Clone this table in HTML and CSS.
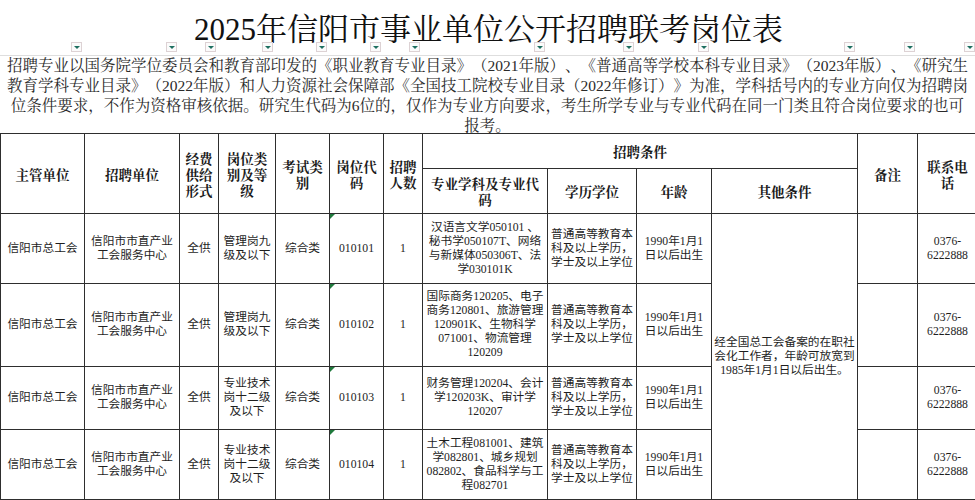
FILE: index.html
```html
<!DOCTYPE html>
<html lang="zh-CN">
<head>
<meta charset="utf-8">
<title>2025年信阳市事业单位公开招聘联考岗位表</title>
<link rel="stylesheet" href="styles.css">
</head>
<body>
<div class="sheet">
  <div class="title-row">
    <h1 class="title">2025年信阳市事业单位公开招聘联考岗位表</h1>
    <div class="filters">
      <span class="fcell"><i class="fbtn"></i></span>
      <span class="fcell"><i class="fbtn"></i></span>
      <span class="fcell"><i class="fbtn"></i></span>
      <span class="fcell"><i class="fbtn"></i></span>
      <span class="fcell"><i class="fbtn"></i></span>
      <span class="fcell"><i class="fbtn"></i></span>
      <span class="fcell"><i class="fbtn"></i></span>
      <span class="fcell"><i class="fbtn"></i></span>
      <span class="fcell"><i class="fbtn"></i></span>
      <span class="fcell"><i class="fbtn"></i></span>
      <span class="fcell"><i class="fbtn"></i></span>
      <span class="fcell"><i class="fbtn"></i></span>
      <span class="fcell"><i class="fbtn"></i></span>
    </div>
  </div>
  <div class="intro">
    <span class="line">招聘专业以国务院学位委员会和教育部印发的《职业教育专业目录》（2021年版）、《普通高等学校本科专业目录》（2023年版）、《研究生</span>
    <span class="line">教育学科专业目录》（2022年版）和人力资源社会保障部《全国技工院校专业目录（2022年修订）》为准，学科括号内的专业方向仅为招聘岗</span>
    <span class="line">位条件要求，不作为资格审核依据。研究生代码为6位的，仅作为专业方向要求，考生所学专业与专业代码在同一门类且符合岗位要求的也可</span>
    <span class="line">报考。</span>
  </div>
  <table class="grid">
    <colgroup>
      <col class="w84"><col class="w95"><col class="w39"><col class="w57"><col class="w54"><col class="w54"><col class="w39">
      <col class="w125"><col class="w89"><col class="w75"><col class="w146"><col class="w60"><col class="w60">
    </colgroup>
    <thead>
      <tr class="h1">
        <th rowspan="2">主管单位</th>
        <th rowspan="2">招聘单位</th>
        <th rowspan="2">经费<br>供给<br>形式</th>
        <th rowspan="2">岗位类<br>别及等<br>级</th>
        <th rowspan="2">考试类<br>别</th>
        <th rowspan="2">岗位代<br>码</th>
        <th rowspan="2">招聘<br>人数</th>
        <th colspan="4">招聘条件</th>
        <th rowspan="2">备注</th>
        <th rowspan="2">联系电<br>话</th>
      </tr>
      <tr class="h2">
        <th>专业学科及专业代<br>码</th>
        <th>学历学位</th>
        <th>年龄</th>
        <th>其他条件</th>
      </tr>
    </thead>
    <tbody>
      <tr class="r1">
        <td class="spaced">信阳市总工会</td>
        <td>信阳市市直产业<br>工会服务中心</td>
        <td>全供</td>
        <td>管理岗九<br>级及以下</td>
        <td>综合类</td>
        <td class="code"><i class="flag"></i>010101</td>
        <td>1</td>
        <td>汉语言文学050101 、<br>秘书学050107T、网络<br>与新媒体050306T、法<br>学030101K</td>
        <td>普通高等教育本<br>科及以上学历，<br>学士及以上学位</td>
        <td>1990年1月1<br>日以后出生</td>
        <td rowspan="4">经全国总工会备案的在职社<br>会化工作者，年龄可放宽到<br>1985年1月1日以后出生。</td>
        <td></td>
        <td>0376-<br>6222888</td>
      </tr>
      <tr class="r2">
        <td class="spaced">信阳市总工会</td>
        <td>信阳市市直产业<br>工会服务中心</td>
        <td>全供</td>
        <td>管理岗九<br>级及以下</td>
        <td>综合类</td>
        <td class="code"><i class="flag"></i>010102</td>
        <td>1</td>
        <td>国际商务120205、电子<br>商务120801、旅游管理<br>120901K、生物科学<br>071001、物流管理<br>120209</td>
        <td>普通高等教育本<br>科及以上学历，<br>学士及以上学位</td>
        <td>1990年1月1<br>日以后出生</td>
        <td></td>
        <td>0376-<br>6222888</td>
      </tr>
      <tr class="r3">
        <td class="spaced">信阳市总工会</td>
        <td>信阳市市直产业<br>工会服务中心</td>
        <td>全供</td>
        <td>专业技术<br>岗十二级<br>及以下</td>
        <td>综合类</td>
        <td class="code"><i class="flag"></i>010103</td>
        <td>1</td>
        <td>财务管理120204、会计<br>学120203K、审计学<br>120207</td>
        <td>普通高等教育本<br>科及以上学历，<br>学士及以上学位</td>
        <td>1990年1月1<br>日以后出生</td>
        <td></td>
        <td>0376-<br>6222888</td>
      </tr>
      <tr class="r4">
        <td class="spaced">信阳市总工会</td>
        <td>信阳市市直产业<br>工会服务中心</td>
        <td>全供</td>
        <td>专业技术<br>岗十二级<br>及以下</td>
        <td>综合类</td>
        <td class="code"><i class="flag"></i>010104</td>
        <td>1</td>
        <td>土木工程081001、建筑<br>学082801、城乡规划<br>082802、食品科学与工<br>程082701</td>
        <td>普通高等教育本<br>科及以上学历，<br>学士及以上学位</td>
        <td>1990年1月1<br>日以后出生</td>
        <td></td>
        <td>0376-<br>6222888</td>
      </tr>
    </tbody>
  </table>
</div>
</body>
</html>
```
FILE: styles.css
```css
* { box-sizing: border-box; text-spacing-trim: space-all; }
html, body { margin: 0; padding: 0; background: #fff; }
body { width: 975px; height: 500px; overflow: hidden; }

.sheet {
  width: 975px;
  overflow: hidden;
  font-family: "Liberation Serif", "Noto Serif CJK SC", "Noto Sans CJK SC", serif;
  color: #222;
}

.title-row {
  display: grid;
  height: 56px;
  border-bottom: 1px solid #dedede;
}
.title {
  grid-area: 1 / 1;
  margin: 0;
  padding-top: 14px;
  text-align: center;
  font-size: 31px;
  line-height: 31px;
  font-weight: normal;
  color: #111;
  white-space: nowrap;
}
.filters {
  grid-area: 1 / 1;
  align-self: start;
  margin-top: 42px;
  display: grid;
  grid-template-columns: 84px 95px 39px 57px 54px 54px 39px 125px 89px 75px 146px 60px 60px;
  height: 11px;
}
.fcell { display: flex; justify-content: flex-end; }
.fbtn {
  width: 11px;
  height: 10px;
  margin-right: 2px;
  border: 1px solid #ddd2d4;
  background: #fbfbfb;
  display: flex;
  align-items: center;
  justify-content: center;
}
.fbtn::after {
  content: "";
  border-left: 3px solid transparent;
  border-right: 3px solid transparent;
  border-top: 3px solid #1e6f60;
}

.intro {
  height: 77px;
  overflow: hidden;
  padding-top: 0;
  text-align: center;
  font-size: 15.5px;
  line-height: 20px;
  color: #2a2a2a;
}
.intro .line { display: block; white-space: nowrap; }

.grid {
  width: 977px;
  table-layout: fixed;
  border-collapse: collapse;
}
.w84 { width: 84px; } .w95 { width: 95px; } .w39 { width: 39px; } .w57 { width: 57px; }
.w54 { width: 54px; } .w125 { width: 125px; } .w89 { width: 89px; } .w75 { width: 75px; }
.w146 { width: 146px; } .w60 { width: 60px; }

.grid th, .grid td {
  border: 1px solid #2e2e2e;
  text-align: center;
  vertical-align: middle;
  padding: 0 1px;
  white-space: nowrap;
  overflow: hidden;
}
.grid th {
  font-family: "Noto Serif CJK SC", "Noto Sans CJK SC", serif;
  font-weight: bold;
  font-size: 13.5px;
  line-height: 16px;
  color: #1a1a1a;
}
.grid td {
  font-family: "Liberation Serif", "Noto Sans CJK SC", sans-serif;
  font-size: 11.7px;
  line-height: 14px;
  color: #1e1e1e;
}
.grid td.spaced { letter-spacing: 0; }
.grid td.code { position: relative; }
.flag {
  position: absolute;
  left: 0;
  top: 0;
  width: 0;
  height: 0;
  border-top: 5px solid #1f7a3c;
  border-right: 5px solid transparent;
}

.h1 { height: 35px; }
.h2 { height: 45px; }
.r1 { height: 70px; }
.r2 { height: 83px; }
.r3 { height: 63px; }
.r4 { height: 70px; }
```
